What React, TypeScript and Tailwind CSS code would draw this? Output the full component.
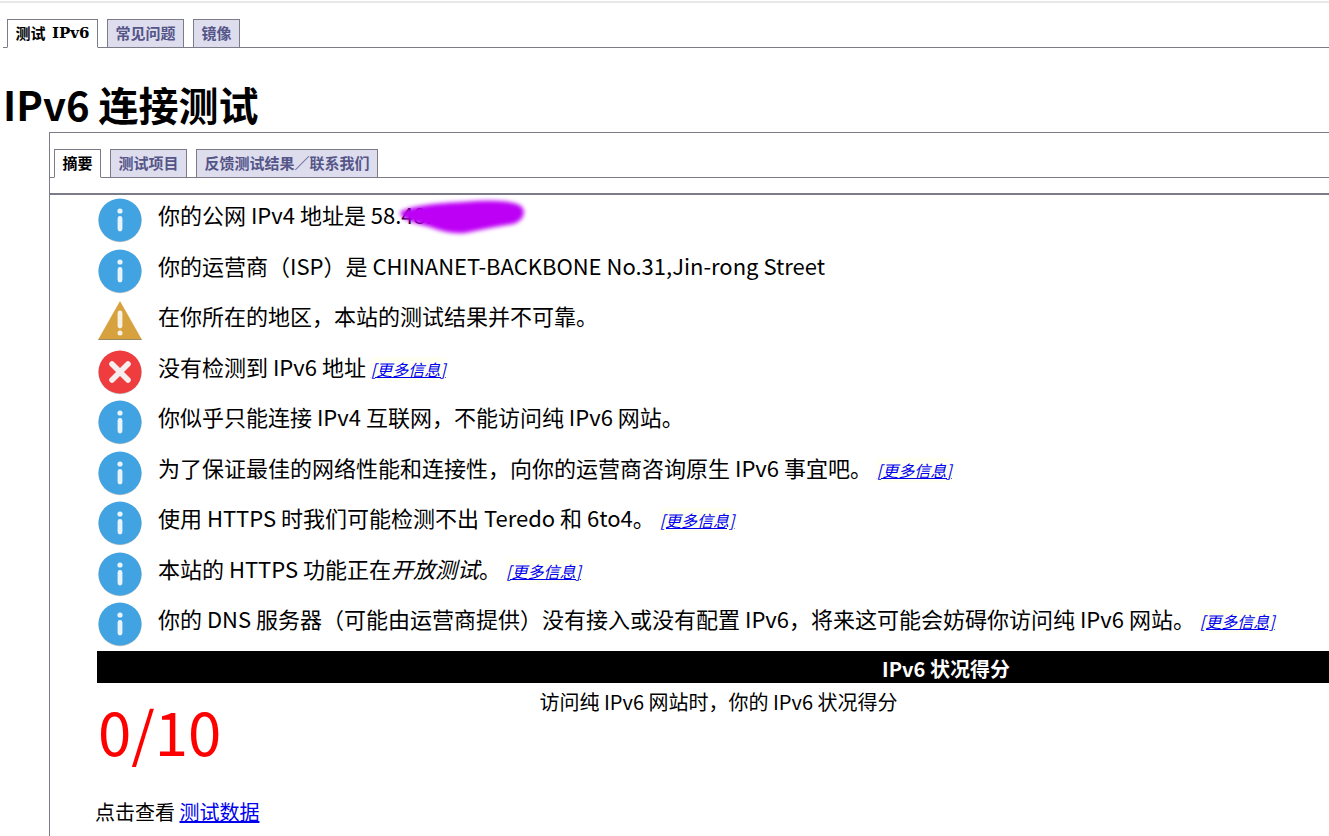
const cjk = "font-['Noto_Sans_CJK_SC','Noto_Sans',sans-serif]";

function Info() {
  return (
    <svg width="46" height="46" viewBox="0 0 46 46" className="shrink-0">
      <circle cx="23" cy="23.6" r="21.6" fill="#8a8f94" opacity="0.55" />
      <circle cx="23" cy="23" r="21.5" fill="#42a3e2" />
      <circle cx="23" cy="14" r="2.6" fill="#e8f3fa" />
      <rect x="20.6" y="19" width="4.8" height="15.5" rx="2.4" fill="#e8f3fa" />
    </svg>
  );
}
function Warn() {
  return (
    <svg width="46" height="46" viewBox="0 0 46 46" className="shrink-0">
      <path d="M23 3 L44.5 41 H1.5 Z" fill="#d7a23e" />
      <path d="M1.5 41 H44.5 L45 42 H1 Z" fill="#9a8a60" />
      <rect x="20.6" y="12.5" width="4.8" height="18" rx="2.4" fill="#f5f1e4" />
      <circle cx="23" cy="35" r="2.5" fill="#f5f1e4" />
    </svg>
  );
}
function Err() {
  return (
    <svg width="46" height="46" viewBox="0 0 46 46" className="shrink-0">
      <circle cx="23" cy="23.6" r="21.6" fill="#8a8f94" opacity="0.55" />
      <circle cx="23" cy="23" r="21.5" fill="#ef3c3f" />
      <path d="M15 15 L31 31 M31 15 L15 31" stroke="#f6eeee" strokeWidth="5.6" strokeLinecap="round" />
    </svg>
  );
}
function More() {
  return (
    <a href="#" className="bg-[#fffff2] text-[16px] italic text-[#0000ee] underline">[更多信息]</a>
  );
}
function Row({ icon, children }: { icon: React.ReactNode; children: React.ReactNode }) {
  return (
    <div className="flex h-[50.5px] items-start">
      <div className="mt-[2px] w-[61px] shrink-0">{icon}</div>
      <div className="mt-[3px] whitespace-nowrap text-[22px] leading-[32px] text-black">{children}</div>
    </div>
  );
}
function Tab({ active, children }: { active?: boolean; children: React.ReactNode }) {
  return (
    <div
      className={
        active
          ? "-mb-px flex h-[29px] items-center border border-[#7c7c88] border-b-white bg-white px-[7.5px] text-[15px] font-bold text-black"
          : "flex h-[28px] items-center border border-b-0 border-[#7c7c88] bg-[#ddddee] px-[7.5px] text-[15px] font-bold text-[#555588]"
      }
    >
      {children}
    </div>
  );
}

export default function App() {
  return (
    <div className={`relative h-[836px] w-[1329px] overflow-hidden bg-white ${cjk}`}>
      <div className="mt-[1px] h-[2px] bg-[#e8e8e8]" />
      <div className="ml-[3px] mt-[16px] flex h-[29px] items-end gap-[9px] border-b border-[#7c7c88] pl-[4px]">
        <Tab active>
          <span className="flex w-[74px] items-center justify-between">测试<span className="font-['DejaVu_Serif',serif] text-[15px]">IPv6</span></span>
        </Tab>
        <Tab>常见问题</Tab>
        <Tab>镜像</Tab>
      </div>
      <h1 className="ml-[3px] mt-[28px] h-[56px] whitespace-nowrap text-[40px] font-bold leading-[56px] text-black">IPv6 连接测试</h1>
      <div className="ml-[49px] h-[704px] w-[1746px] border-l border-t border-[#7c7c88]">
        <div className="flex h-[45px] items-end gap-[9px] border-b border-[#7c7c88] pl-[4px]">
          <Tab active>摘要</Tab>
          <Tab>测试项目</Tab>
          <Tab>反馈测试结果／联系我们</Tab>
        </div>
        <div className="h-[17px] border-b-2 border-[#7c7c88]" />
        <div className="pl-[47px]">
          <Row icon={<Info />}>你的公网 IPv4 地址是 58.48.</Row>
          <Row icon={<Info />}>你的运营商（ISP）是 CHINANET-BACKBONE No.31,Jin-rong Street</Row>
          <Row icon={<Warn />}>在你所在的地区，本站的测试结果并不可靠。</Row>
          <Row icon={<Err />}>没有检测到 IPv6 地址 <More /></Row>
          <Row icon={<Info />}>你似乎只能连接 IPv4 互联网，不能访问纯 IPv6 网站。</Row>
          <Row icon={<Info />}>为了保证最佳的网络性能和连接性，向你的运营商咨询原生 IPv6 事宜吧。 <More /></Row>
          <Row icon={<Info />}>使用 HTTPS 时我们可能检测不出 Teredo 和 6to4。 <More /></Row>
          <Row icon={<Info />}>本站的 HTTPS 功能正在<em>开放测试</em>。 <More /></Row>
          <Row icon={<Info />}>你的 DNS 服务器（可能由运营商提供）没有接入或没有配置 IPv6，将来这可能会妨碍你访问纯 IPv6 网站。 <More /></Row>
          <div className="mt-[1px] h-[32px] bg-black text-center text-[20px] font-bold leading-[36px] text-white">IPv6 状况得分</div>
          <div className="flex h-[114px]">
            <div className="w-[124px] shrink-0 pl-[1px] pt-[11px] text-[60px] leading-[72px] text-[#ff0000]">0/10</div>
            <div className="w-[995px] pt-[4px] text-center text-[20px] leading-[30px] text-black">访问纯 IPv6 网站时，你的 IPv6 状况得分</div>
          </div>
          <div className="-ml-[2px] text-[20px] leading-[30px] text-black">点击查看 <a href="#" className="text-[#0000ee] underline">测试数据</a></div>
        </div>
      </div>
      <svg className="absolute left-[388px] top-[194px]" width="146" height="48" viewBox="0 0 146 48">
        <defs>
          <filter id="b" x="-10%" y="-30%" width="120%" height="160%"><feGaussianBlur stdDeviation="2.2" /></filter>
        </defs>
        <path d="M12 18 C22 12 50 9 75 8 C100 6 125 6 133 12 C139 18 135 27 125 30 C108 33 95 35 82 38 C70 41 55 38 42 33 C28 29 14 27 12 18 Z" fill="#bd00f5" filter="url(#b)" />
      </svg>
    </div>
  );
}
